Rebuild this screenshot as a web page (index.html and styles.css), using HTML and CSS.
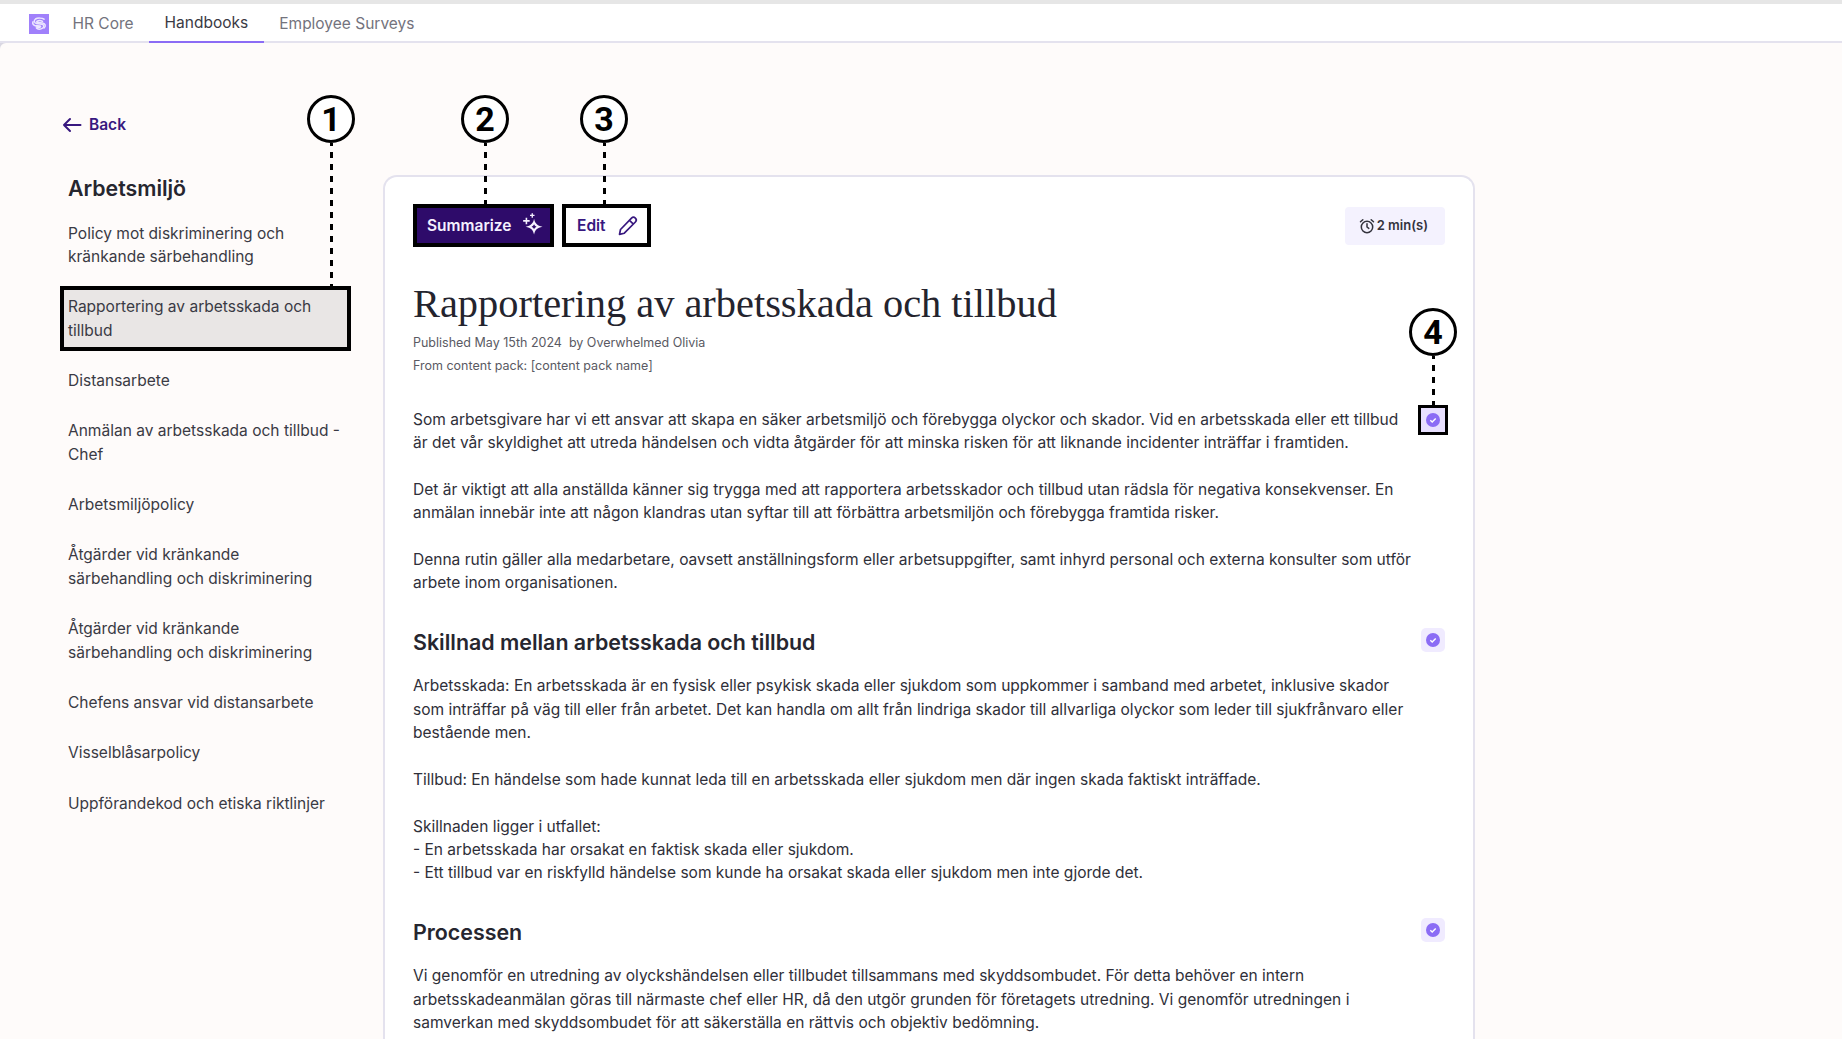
FILE: index.html
```html
<!DOCTYPE html>
<html lang="sv">
<head>
  <meta charset="UTF-8">
  <meta name="viewport" content="width=device-width, initial-scale=1.0">
  <title>Handbooks</title>
  <link rel="stylesheet" href="styles.css">
</head>
<body>
  <div class="topstrip"></div>
  <nav class="topnav">
    <svg class="logo" viewBox="0 0 20 20" aria-hidden="true">
      <rect width="20" height="20" fill="#a080fb"/>
      <g fill="none" stroke="#ece6ff" stroke-width="1.500" stroke-linecap="round">
        <path d="M15 5.200c-1.700-1.300-6.500-1.500-8.500-.2-2 1.400-1.300 4 1 4.500l5.500.7c2 .4 2.400 2.800.6 4-1.900 1.200-4.600 1-6.100-.1"/>
        <path d="M13.500 7.300c-1.500-.8-4-.9-5.300-.2-.8.5-.5 1.200.4 1.300l5 .6c3 .5 3.400 3.300 1.500 5"/>
        <path d="M4 7.800c-.6 1.600 0 3 1.600 3.700l5.400.6c.8.200.8 1-.2 1.200-1.200.3-2.700.1-3.700-.4"/>
      </g>
    </svg>
    <a class="tab" href="#">HR Core</a>
    <a class="tab active" href="#">Handbooks</a>
    <a class="tab" href="#">Employee Surveys</a>
  </nav>

  <div class="page">
    <aside class="sidebar">
      <a class="back" href="#">
        <svg width="20" height="16" viewBox="0 0 20 16" aria-hidden="true"><path d="M18.500 8H2M8 2 2 8l6 6" fill="none" stroke="#38187f" stroke-width="2" stroke-linecap="round" stroke-linejoin="round"/></svg>
        Back
      </a>
      <h3 class="side-title">Arbetsmiljö</h3>
      <ul class="side-list">
        <li>Policy mot diskriminering och kränkande särbehandling</li>
        <li class="current">Rapportering av arbetsskada och tillbud</li>
        <li>Distansarbete</li>
        <li>Anmälan av arbetsskada och tillbud - Chef</li>
        <li>Arbetsmiljöpolicy</li>
        <li>Åtgärder vid kränkande särbehandling och diskriminering</li>
        <li>Åtgärder vid kränkande särbehandling och diskriminering</li>
        <li>Chefens ansvar vid distansarbete</li>
        <li>Visselblåsarpolicy</li>
        <li>Uppförandekod och etiska riktlinjer</li>
      </ul>
    </aside>

    <main class="card">
      <div class="toolbar">
        <button class="btn btn-primary">
          Summarize
          <svg width="25" height="27" viewBox="0 0 22 24" aria-hidden="true" fill="#f6f2ff"><path d="M11.500 6c.9 4.300 2.700 6.100 7.500 7-4.800.9-6.600 2.700-7.500 7-.9-4.300-2.700-6.100-7.500-7 4.800-.9 6.600-2.700 7.500-7Zm0 4.800c-.4 1-1.200 1.800-2.200 2.200 1 .4 1.800 1.200 2.200 2.200.4-1 1.200-1.800 2.200-2.200-1-.4-1.800-1.200-2.200-2.200Z" fill-rule="evenodd"/><path d="M4 5h1.400v2.200h2.200v1.400H5.400v2.200H4V8.600H1.800V7.200H4ZM9.300 1h1.200v1.400h1.400v1.200h-1.400V5H9.300V3.600H7.900V2.400h1.400Z"/></svg>
        </button>
        <button class="btn btn-plain">
          Edit
          <svg width="22" height="22" viewBox="0 0 22 22" aria-hidden="true"><path d="M14.500 3.200a2.700 2.700 0 0 1 3.900 3.800L7.300 18.200l-4.800 1.200 1-4.900ZM12.500 5.300l3.900 3.800" fill="none" stroke="#38187f" stroke-width="1.700" stroke-linejoin="round"/></svg>
        </button>
        <div class="read-time">
          <svg width="16" height="16" viewBox="0 0 16 16" aria-hidden="true"><g fill="none" stroke="#33333d" stroke-width="1.500" stroke-linecap="round"><circle cx="8" cy="9" r="5.700"/><path d="M8 5.800V9l1.800 1.400M1.500 3.800 3.800 1.700M14.500 3.800l-2.300-2.100"/></g></svg>
          2 min(s)
        </div>
      </div>

      <h1 class="title">Rapportering av arbetsskada och tillbud</h1>
      <p class="meta">Published May 15th 2024 &nbsp;by Overwhelmed Olivia</p>
      <p class="meta">From content pack: [content pack name]</p>

      <section class="block block-intro">
        <div class="block-text">
          <p>Som arbetsgivare har vi ett ansvar att skapa en säker arbetsmiljö och förebygga olyckor och skador. Vid en arbetsskada eller ett tillbud är det vår skyldighet att utreda händelsen och vidta åtgärder för att minska risken för att liknande incidenter inträffar i framtiden.</p>
          <p>Det är viktigt att alla anställda känner sig trygga med att rapportera arbetsskador och tillbud utan rädsla för negativa konsekvenser. En anmälan innebär inte att någon klandras utan syftar till att förbättra arbetsmiljön och förebygga framtida risker.</p>
          <p>Denna rutin gäller alla medarbetare, oavsett anställningsform eller arbetsuppgifter, samt inhyrd personal och externa konsulter som utför arbete inom organisationen.</p>
        </div>
        <span class="check check-marked"><svg viewBox="0 0 14 14" aria-hidden="true"><circle cx="7" cy="7" r="7" fill="#8b6cf5"/><path d="m4.300 7.300 1.900 1.800 3.500-3.700" fill="none" stroke="#fff" stroke-width="1.400"/></svg></span>
      </section>

      <section class="block">
        <div class="block-text">
          <h2>Skillnad mellan arbetsskada och tillbud</h2>
          <p>Arbetsskada: En arbetsskada är en fysisk eller psykisk skada eller sjukdom som uppkommer i samband med arbetet, inklusive skador som inträffar på väg till eller från arbetet. Det kan handla om allt från lindriga skador till allvarliga olyckor som leder till sjukfrånvaro eller bestående men.</p>
          <p>Tillbud: En händelse som hade kunnat leda till en arbetsskada eller sjukdom men där ingen skada faktiskt inträffade.</p>
          <p>Skillnaden ligger i utfallet:<br>- En arbetsskada har orsakat en faktisk skada eller sjukdom.<br>- Ett tillbud var en riskfylld händelse som kunde ha orsakat skada eller sjukdom men inte gjorde det.</p>
        </div>
        <span class="check"><svg viewBox="0 0 14 14" aria-hidden="true"><circle cx="7" cy="7" r="7" fill="#8b6cf5"/><path d="m4.300 7.300 1.900 1.800 3.500-3.700" fill="none" stroke="#fff" stroke-width="1.400"/></svg></span>
      </section>

      <section class="block">
        <div class="block-text">
          <h2>Processen</h2>
          <p>Vi genomför en utredning av olyckshändelsen eller tillbudet tillsammans med skyddsombudet. För detta behöver en intern arbetsskadeanmälan göras till närmaste chef eller HR, då den utgör grunden för företagets utredning. Vi genomför utredningen i samverkan med skyddsombudet för att säkerställa en rättvis och objektiv bedömning.</p>
        </div>
        <span class="check"><svg viewBox="0 0 14 14" aria-hidden="true"><circle cx="7" cy="7" r="7" fill="#8b6cf5"/><path d="m4.300 7.300 1.900 1.800 3.500-3.700" fill="none" stroke="#fff" stroke-width="1.400"/></svg></span>
      </section>
    </main>
  </div>

  <!-- numbered callouts sit on top of the page -->
  <div class="callout callout-1"><span class="num">1</span><i class="dash"></i></div>
  <div class="callout callout-2"><span class="num">2</span><i class="dash"></i></div>
  <div class="callout callout-3"><span class="num">3</span><i class="dash"></i></div>
  <div class="callout callout-4"><span class="num">4</span><i class="dash"></i></div>
</body>
</html>
```

FILE: styles.css
```css
* {
  box-sizing: border-box;
}
html, body {
  height: 100%;
}
body {
  margin: 0;
  overflow: hidden;
  background-color: #d9d7e2;
  color: #2f2f39;
  font-family: "Inter", "Liberation Sans", sans-serif;
  font-size: 15.530px;
  line-height: 23.400px;
}
a {
  text-decoration: none;
  color: inherit;
}

.topstrip {
  height: 4px;
  background-color: #e6e6e6;
}
.topnav {
  display: flex;
  align-items: stretch;
  height: 39px;
  padding-left: 29px;
  background-color: #fff;
  border-bottom: 2px solid #e4e2ee;
}
.logo {
  width: 20px;
  height: 20px;
  margin: 10px 8px 0 0;
}
.tab {
  display: flex;
  align-items: center;
  height: 39px;
  padding: 1px 15.500px 0;
  color: #73737d;
  font-size: 15.500px;
}
.tab.active {
  color: #3a3a44;
  border-bottom: 2px solid #8b6cf5;
}

.page {
  display: flex;
  gap: 32px;
  height: calc(100vh - 43px);
  padding: 0 0 0 60px;
  background-color: #fefbfa;
  border-top-left-radius: 6px;
}

.sidebar {
  width: 291px;
  flex: none;
  padding-top: 70px;
}
.back {
  display: flex;
  align-items: center;
  gap: 7px;
  height: 23px;
  margin-left: 2px;
  color: #38187f;
  font-weight: 600;
  font-size: 15.500px;
}
.side-title {
  margin: 38px 0 10.500px 8px;
  font-size: 21.300px;
  line-height: 28px;
  font-weight: 600;
  color: #26262f;
}
.side-list {
  list-style: none;
  margin: 0;
  padding: 0;
  display: flex;
  flex-direction: column;
  gap: 8.950px;
}
.side-list li {
  padding: 9px 8px;
  color: #3a3a44;
}
.side-list .current {
  background-color: #e9e6e5;
  outline: 4px solid #000;
  outline-offset: -4px;
}

.card {
  width: 1092px;
  flex: none;
  margin-top: 132px;
  padding: 27px 30px 0;
  background-color: #fff;
  border: 2px solid #e4e2ee;
  border-bottom: 0;
  border-radius: 14px 14px 0 0;
}
.toolbar {
  display: flex;
  align-items: center;
  gap: 8px;
  margin-left: -2px;
}
.btn {
  display: flex;
  align-items: center;
  justify-content: space-between;
  height: 43px;
  border: 4px solid #000;
  font-family: inherit;
  font-size: 15.500px;
  font-weight: 600;
}
.btn-primary {
  width: 141px;
  padding: 0 4px 0 10px;
  background-color: #2e0b6a;
  color: #f4f0ff;
}
.btn-plain {
  width: 89px;
  padding: 0 8px 0 11px;
  background-color: #fff;
  color: #38187f;
}
.read-time {
  display: flex;
  align-items: center;
  gap: 2px;
  margin-left: auto;
  margin-right: -2px;
  height: 38px;
  padding: 0 17px 0 14px;
  background-color: #f4f2fe;
  border-radius: 4px;
  color: #33333d;
  font-size: 13px;
  font-weight: 600;
}

.title {
  margin: 33px 0 3px -2px;
  font-family: "Liberation Serif", serif;
  font-weight: 400;
  font-size: 40.400px;
  line-height: 48px;
  color: #24242e;
}
.meta {
  margin: 0 0 0 -2px;
  color: #5a5a63;
  font-size: 12.500px;
  line-height: 23.400px;
}

.block {
  display: flex;
  justify-content: space-between;
  margin: 0 -2px;
}
.block-intro {
  margin-top: 29.700px;
}
.block-text {
  width: 1003px;
}
.block-text p {
  margin: 0 0 23.400px;
}
.block-text h2 {
  margin: 9px 0 17px;
  font-size: 21.400px;
  line-height: 30px;
  font-weight: 600;
  color: #26262f;
}
.check {
  display: flex;
  align-items: center;
  justify-content: center;
  flex: none;
  width: 24px;
  height: 24px;
  margin-top: 10px;
  background-color: #f0ebff;
  border-radius: 5px;
}
.check svg {
  width: 14px;
  height: 14px;
}
.check-marked {
  margin-top: 0;
  background-color: #e8e0ff;
  border-radius: 0;
  outline: 3px solid #000;
}

.callout {
  position: absolute;
  display: flex;
  flex-direction: column;
  align-items: center;
  width: 48px;
}
.num {
  display: flex;
  align-items: center;
  justify-content: center;
  width: 48px;
  height: 48px;
  flex: none;
  background-color: #fff;
  border: 3px solid #000;
  border-radius: 50%;
  color: #000;
  font-family: "Roboto", sans-serif;
  font-weight: 700;
  font-size: 34px;
  line-height: 1;
}
.dash {
  width: 3px;
  background-image: linear-gradient(to bottom, #000 6px, transparent 6px);
  background-size: 3px 12px;
  background-position: 0 -3px;
}
.callout-1 { left: 307px; top: 95px; }
.callout-1 .dash { height: 147px; }
.callout-2 { left: 461px; top: 95px; }
.callout-2 .dash { height: 61px; }
.callout-3 { left: 580px; top: 95px; }
.callout-3 .dash { height: 61px; }
.callout-4 { left: 1409px; top: 308px; }
.callout-4 .dash { height: 49px; }
```
